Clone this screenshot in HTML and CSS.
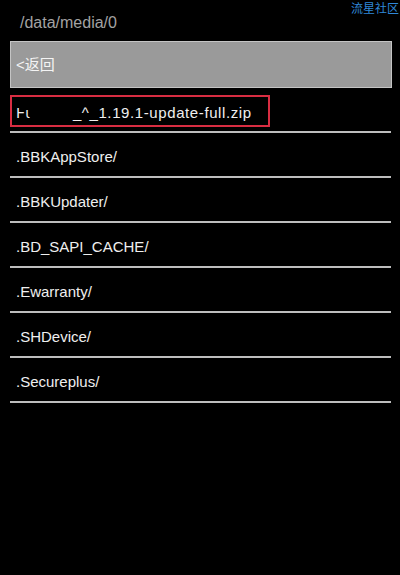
FILE: index.html
```html
<!DOCTYPE html>
<html>
<head>
<meta charset="utf-8">
<link rel="stylesheet" href="styles.css">
</head>
<body>
<div class="screen">
  <div class="watermark">流星社区</div>
  <div class="path">/data/media/0</div>
  <div class="back">&lt;返回</div>
  <ul class="list">
    <li class="item item-selected"><span class="sel-box"><span class="masked">Ⱶι</span><span class="gap"></span>_^_1.19.1-update-full.zip</span></li>
    <li class="item">.BBKAppStore/</li>
    <li class="item">.BBKUpdater/</li>
    <li class="item">.BD_SAPI_CACHE/</li>
    <li class="item">.Ewarranty/</li>
    <li class="item">.SHDevice/</li>
    <li class="item">.Secureplus/</li>
  </ul>
</div>
</body>
</html>
```
FILE: styles.css
```css
html, body {
  margin: 0;
  padding: 0;
  background: #000;
}
.screen {
  position: relative;
  width: 400px;
  height: 575px;
  background: #000;
  font-family: "Liberation Sans", Arial, "Noto Sans CJK SC", sans-serif;
  color: #efefef;
}
.watermark {
  position: absolute;
  top: 0;
  right: 1px;
  font-family: "Noto Sans CJK SC", sans-serif;
  font-size: 12px;
  line-height: 15px;
  color: #2f88d8;
}
.path {
  padding: 13px 0 9px 20px;
  font-size: 16px;
  line-height: 19px;
  color: #a3a3a3;
}
.back {
  margin: 0 8px 0 10px;
  height: 45px;
  box-sizing: content-box;
  background: #9a9a9a;
  border: 1px solid #c4c4c4;
  padding-left: 5px;
  font-family: "Liberation Sans", "Noto Sans CJK SC", sans-serif;
  font-size: 15px;
  line-height: 46px;
  color: #f4f4f4;
}
.list {
  list-style: none;
  margin: 0 9px 0 10px;
  padding: 0;
}
.item {
  height: 28px;
  padding-top: 15px;
  box-sizing: content-box;
  border-bottom: 2px solid #bdbdbd;
  padding-left: 6px;
  font-size: 15px;
  line-height: 18px;
  display: flex;
  align-items: flex-start;
}
.item-selected {
  height: 43px;
  padding-top: 0;
  padding-left: 0;
}
.sel-box {
  display: block;
  margin-top: 7px;
  height: 25px;
  padding: 3px 0 0 4px;
  border: 2px solid #d92d42;
  box-sizing: content-box;
  width: 252px;
  line-height: 25px;
  letter-spacing: 0.6px;
  white-space: nowrap;
}
.masked {
  font-family: "DejaVu Sans", sans-serif;
  font-size: 14px;
  letter-spacing: 0;
}
.gap {
  display: inline-block;
  width: 43px;
}
```
